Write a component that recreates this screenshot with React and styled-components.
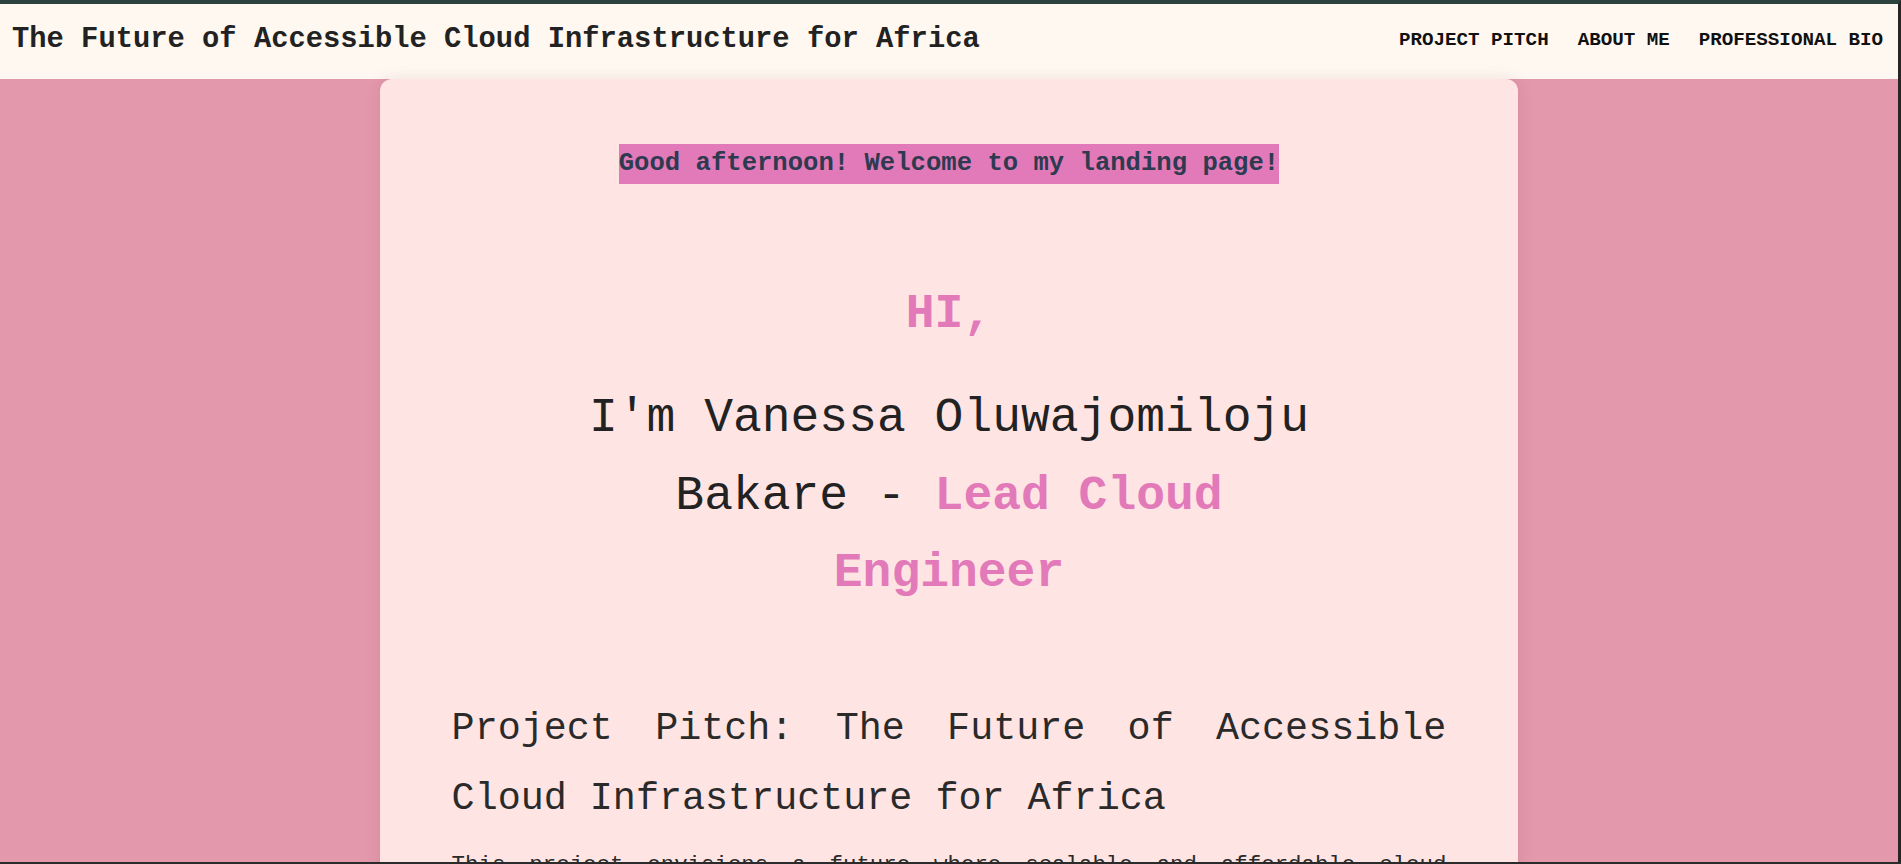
import React from 'react'
import styled, { createGlobalStyle } from 'styled-components'

const GlobalStyle = createGlobalStyle`
  html, body {
    margin: 0;
    padding: 0;
  }
  body {
    background-color: #e398ab;
    border-top: 4px solid #2b423e;
    border-right: 3px solid #262626;
    font-family: "Liberation Mono", "Courier New", monospace;
    color: #222;
    overflow: hidden;
  }
`;

export default function App() {
  return (
    <>
      <GlobalStyle />
      <Header>
        <Title>The Future of Accessible Cloud Infrastructure for Africa</Title>
        <Nav>
          <NavLink href="#pitch">PROJECT PITCH</NavLink>
          <NavLink href="#about">ABOUT ME</NavLink>
          <NavLink href="#bio">PROFESSIONAL BIO</NavLink>
        </Nav>
      </Header>
      <Main>
        <Card>
          <Greeting>Good afternoon! Welcome to my landing page!</Greeting>
          <Hello>HI,</Hello>
          <Name>
            I'm Vanessa Oluwajomiloju Bakare - <Accent>Lead Cloud Engineer</Accent>
          </Name>
          <Section id="pitch">
            <SectionTitle>Project Pitch: The Future of Accessible Cloud Infrastructure for Africa</SectionTitle>
            <Paragraph>
              This project envisions a future where scalable and affordable cloud
              infrastructure is within reach of every business, school and
              community across the African continent.
            </Paragraph>
          </Section>
        </Card>
      </Main>
      <BottomEdge />
    </>
  )
}

const Header = styled.header`
  height: 75px;
  background-color: #fff8f1;
  display: flex;
  align-items: center;
  justify-content: space-between;
  padding: 0 15px 0 12px;
  box-sizing: border-box;
`;

const Title = styled.h1`
  margin: -4px 0 0;
  font-size: 28.8px;
  font-weight: bold;
  color: #222;
`;

const Nav = styled.nav`
  display: flex;
  gap: 29px;
  margin-top: -4px;
`;

const NavLink = styled.a`
  font-size: 19.2px;
  font-weight: bold;
  color: #111;
  text-decoration: none;
`;

const Main = styled.main`
  display: flex;
  justify-content: center;
`;

const Card = styled.div`
  width: 60%;
  min-height: 900px;
  background-color: #ffe4e4;
  border-radius: 12px 12px 0 0;
  box-shadow: 0 0 16px rgba(120, 40, 70, 0.12);
  padding: 65px 72px 0;
  box-sizing: border-box;
  display: flex;
  flex-direction: column;
  align-items: center;
`;

const Greeting = styled.p`
  margin: 0;
  font-size: 25.6px;
  font-weight: bold;
  line-height: 28px;
  padding: 6px 0;
  background-color: #e27ab9;
  color: #2e3a4f;
`;

const Hello = styled.h2`
  margin: 92px 0 0;
  font-size: 48px;
  line-height: 77px;
  font-weight: bold;
  color: #e27ab9;
`;

const Name = styled.h1`
  margin: 27px 0 0;
  width: 780px;
  text-align: center;
  font-size: 48px;
  line-height: 77.5px;
  font-weight: normal;
  color: #222;
`;

const Accent = styled.span`
  font-weight: bold;
  color: #e27ab9;
`;

const Section = styled.section`
  margin-top: 81px;
  width: 100%;
`;

const SectionTitle = styled.h2`
  margin: 0;
  font-size: 38.4px;
  line-height: 70.6px;
  font-weight: normal;
  text-align: justify;
  color: #2a2a2a;
`;

const Paragraph = styled.p`
  margin: 8px 0 0;
  font-size: 22.4px;
  line-height: 44px;
  text-align: justify;
  color: #2a2a2a;
`;

const BottomEdge = styled.div`
  position: fixed;
  left: 0;
  right: 0;
  bottom: 0;
  height: 2px;
  background-color: #2b2b2b;
`;
